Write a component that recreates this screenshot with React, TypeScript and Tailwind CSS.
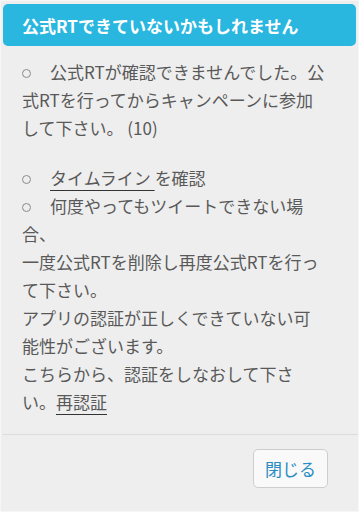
import React from "react";

const Bullet = () => (
  <span className="inline-block w-[9px] h-[9px] rounded-full border border-[#8a8a8a] mr-[19px] align-[1px]" />
);

export default function App() {
  return (
    <div
      className="w-[359px] h-[512px] bg-[#f6f6f6] p-px"
      style={{ fontFamily: '"Noto Sans CJK JP", "Noto Sans", sans-serif' }}
    >
      <div className="h-[510px] bg-[#eeeeee] flex flex-col">
        <div className="mx-[2px] mt-[3px] h-[42px] rounded-[5px] bg-[#29b6df] flex items-center pl-[19px]">
          <span className="text-[17px] font-bold text-white leading-none">
            公式RTできていないかもしれません
          </span>
        </div>
        <div className="pl-[21px] pr-[10px] pt-[12px] pb-[18px] text-[17px] leading-[28px] text-[#595959]">
          <p className="whitespace-nowrap">
            <Bullet />
            公式RTが確認できませんでした。公
            <br />
            式RTを行ってからキャンペーンに参加
            <br />
            して下さい。 (10)
          </p>
          <p className="mt-[22px] whitespace-nowrap">
            <Bullet />
            <span className="underline decoration-[#333] underline-offset-[5px]">タイムライン </span>
            を確認
            <br />
            <Bullet />
            何度やってもツイートできない場
            <br />
            合、
            <br />
            一度公式RTを削除し再度公式RTを行っ
            <br />
            て下さい。
            <br />
            アプリの認証が正しくできていない可
            <br />
            能性がございます。
            <br />
            こちらから、認証をしなおして下さ
            <br />
            い。<span className="underline decoration-[#333] underline-offset-[5px]">再認証</span>
          </p>
        </div>
        <div className="ml-[2px] h-px bg-[#dcdcdc]" />
        <div className="flex justify-end pt-[14px] pr-[30px]">
          <button className="w-[75px] h-[39px] rounded-[5px] border border-[#cdcdcd] bg-[#f9f9f9] text-[17px] text-[#2a8cc3] leading-none">
            閉じる
          </button>
        </div>
      </div>
    </div>
  );
}
